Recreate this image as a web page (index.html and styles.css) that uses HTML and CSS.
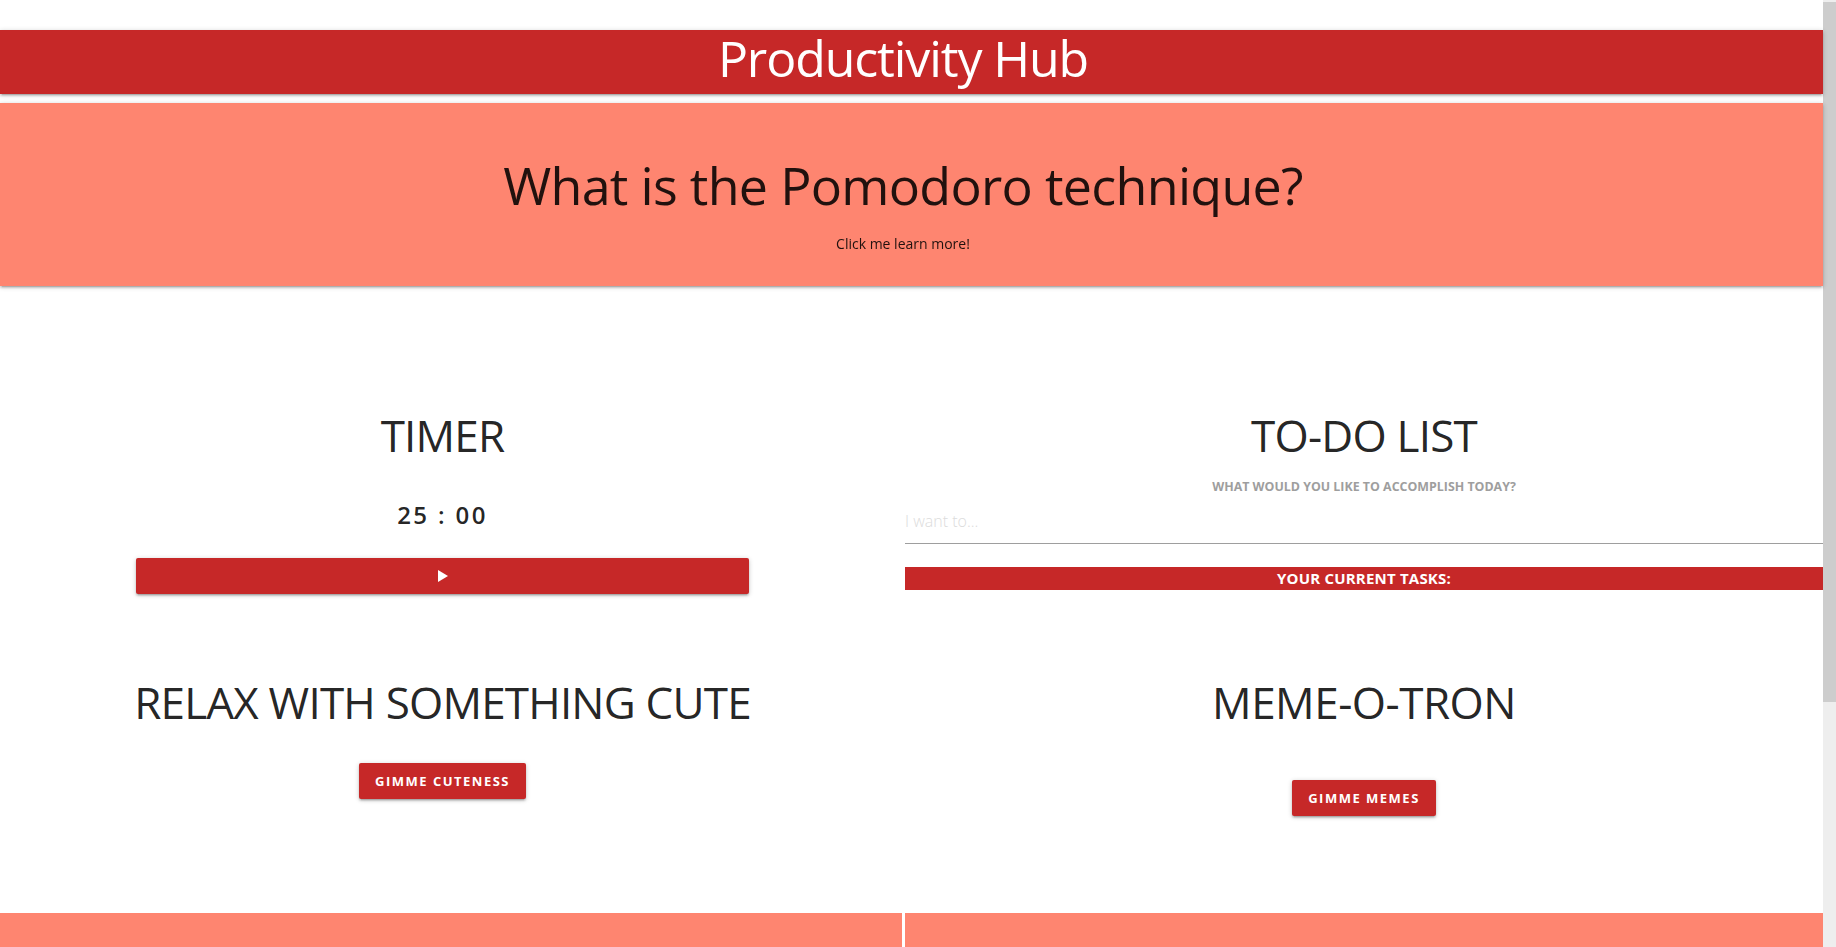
FILE: index.html
```html
<!DOCTYPE html>
<html lang="en">
<head>
<meta charset="utf-8">
<title>Productivity Hub</title>
<link rel="stylesheet" href="styles.css">
</head>
<body>
<div class="page">
  <nav class="navbar">
    <h1 class="brand">Productivity Hub</h1>
  </nav>
  <section class="hero">
    <h2 class="hero-title">What is the Pomodoro technique?</h2>
    <p class="hero-link">Click me learn more!</p>
  </section>
  <main class="tools">
    <section class="tool timer">
      <h3 class="tool-title">TIMER</h3>
      <div class="clock">25 : 00</div>
      <button class="btn btn-wide" type="button" aria-label="Start">
        <svg class="play" width="10" height="12" viewBox="0 0 10 12"><polygon points="0,0 10,6 0,12" fill="#fff"/></svg>
      </button>
    </section>
    <section class="tool todo">
      <h3 class="tool-title">TO-DO LIST</h3>
      <p class="todo-question">WHAT WOULD YOU LIKE TO ACCOMPLISH TODAY?</p>
      <input class="todo-input" type="text" placeholder="I want to...">
      <div class="tasks-bar">YOUR CURRENT TASKS:</div>
    </section>
    <section class="tool relax">
      <h3 class="tool-title">RELAX WITH SOMETHING CUTE</h3>
      <button class="btn btn-small" type="button">GIMME CUTENESS</button>
    </section>
    <section class="tool meme">
      <h3 class="tool-title">MEME-O-TRON</h3>
      <button class="btn btn-small" type="button">GIMME MEMES</button>
    </section>
  </main>
  <footer class="panels">
    <div class="panel"></div>
    <div class="panel"></div>
  </footer>
</div>
<div class="scrollbar" aria-hidden="true">
  <div class="scroll-thumb"></div>
</div>
</body>
</html>
```
FILE: styles.css
```css
* {
  box-sizing: border-box;
}
body {
  margin: 0;
  font-family: "Open Sans", "Noto Sans", sans-serif;
  color: rgba(0, 0, 0, 0.87);
  background: #fff;
}
.page {
  width: 1823px;
  padding-top: 30px;
}
.scrollbar {
  position: fixed;
  top: 0;
  right: 0;
  width: 13px;
  height: 100vh;
  background: #eeeeee;
  padding-top: 2px;
}
.scroll-thumb {
  height: 700px;
  background: #cdcdcd;
}
.navbar {
  height: 64px;
  padding-right: 17px;
  background: #c62828;
  box-shadow: 0 2px 2px 0 rgba(0,0,0,.14), 0 3px 1px -2px rgba(0,0,0,.12), 0 1px 5px 0 rgba(0,0,0,.2);
  position: relative;
  z-index: 2;
}
.brand {
  margin: 0;
  text-align: center;
  color: #fff;
  font-weight: 400;
  font-size: 50px;
  letter-spacing: -1.1px;
  line-height: 57px;
}
.hero {
  margin-top: 9px;
  height: 183px;
  padding: 52px 17px 0 0;
  background: #fe8570;
  text-align: center;
  box-shadow: 0 2px 2px 0 rgba(0,0,0,.14), 0 3px 1px -2px rgba(0,0,0,.12), 0 1px 5px 0 rgba(0,0,0,.2);
  position: relative;
  z-index: 1;
}
.hero-title {
  margin: 0;
  font-weight: 400;
  font-size: 52px;
  letter-spacing: -0.7px;
  line-height: 60px;
}
.hero-link {
  margin: 19px 0 0;
  font-size: 14px;
  line-height: 20px;
}
.tools {
  display: grid;
  grid-template-columns: 885px 1fr;
  column-gap: 20px;
  padding-top: 121px;
}
.tool {
  text-align: center;
}
.tool-title {
  margin: 0;
  font-weight: 400;
  font-size: 44px;
  letter-spacing: -0.8px;
  line-height: 56px;
}
.meme .tool-title {
  letter-spacing: -0.5px;
}
.clock {
  margin-top: 37px;
  font-size: 24px;
  line-height: 30px;
  font-weight: 600;
  letter-spacing: 2.4px;
}
.btn {
  border: none;
  border-radius: 2px;
  background: #c62828;
  color: #fff;
  height: 36px;
  font-family: inherit;
  font-weight: 700;
  font-size: 13px;
  letter-spacing: 1.5px;
  box-shadow: 0 2px 2px 0 rgba(0,0,0,.14), 0 3px 1px -2px rgba(0,0,0,.12), 0 1px 5px 0 rgba(0,0,0,.2);
  cursor: pointer;
}
.btn-wide {
  display: flex;
  align-items: center;
  justify-content: center;
  width: 613px;
  margin: 28px auto 0;
}
.btn-small {
  padding: 0 16px;
}
.relax .btn-small {
  margin-top: 33px;
}
.meme .btn-small {
  margin-top: 50px;
}
.relax, .meme {
  padding-top: 80px;
}
.todo-question {
  margin: 16px 0 0;
  font-size: 12.4px;
  line-height: 16px;
  font-weight: 700;
  color: #9e9e9e;
}
.todo-input {
  display: block;
  width: 100%;
  height: 46px;
  margin-top: 3px;
  padding: 0;
  border: none;
  border-bottom: 1px solid #9e9e9e;
  outline: none;
  background: transparent;
  font-family: inherit;
  font-size: 16px;
  font-weight: 300;
}
.todo-input::placeholder {
  color: #dcdcdc;
}
.tasks-bar {
  margin-top: 23px;
  height: 23px;
  line-height: 23px;
  background: #c62828;
  color: #fff;
  font-weight: 700;
  font-size: 15px;
  letter-spacing: 0.2px;
}
.panels {
  display: grid;
  grid-template-columns: 902px 1fr;
  column-gap: 3px;
  margin-top: 97px;
}
.panel {
  height: 366px;
  background: #fe8570;
}
```
